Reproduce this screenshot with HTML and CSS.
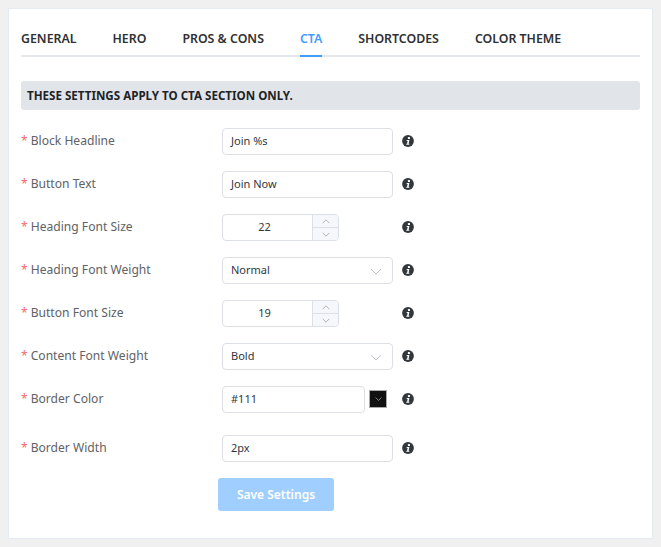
FILE: index.html
```html
<!DOCTYPE html>
<html lang="en">
<head>
    <meta charset="UTF-8">
    <meta name="viewport" content="width=device-width, initial-scale=1.0">
    <title>CTA Settings</title>
    <link rel="stylesheet" href="styles.css">
</head>
<body>
    <svg class="icon-defs" width="0" height="0">
        <symbol id="info" viewBox="0 0 12 12">
            <circle cx="6" cy="6" r="5.9" fill="#32373c"/>
            <rect x="5.900" y="1.900" width="2.100" height="2" rx="0.500" fill="#fff"/>
            <path d="M4.500 4.900h2.900L6.600 8.700h.8l-.2 1H4.200l.2-1h.7l.5-2.800h-.8z" fill="#fff"/>
        </symbol>
        <symbol id="chev-down" viewBox="0 0 12 7">
            <path d="M1 1l5 5 5-5" fill="none" stroke="currentColor" stroke-width="1"/>
        </symbol>
        <symbol id="chev-up" viewBox="0 0 12 7">
            <path d="M1 6l5-5 5 5" fill="none" stroke="currentColor" stroke-width="1"/>
        </symbol>
    </svg>

    <div class="card">
        <div class="tabs">
            <div class="tab">GENERAL</div>
            <div class="tab">HERO</div>
            <div class="tab">PROS &amp; CONS</div>
            <div class="tab active">CTA</div>
            <div class="tab">SHORTCODES</div>
            <div class="tab">COLOR THEME</div>
        </div>

        <div class="notice">THESE SETTINGS APPLY TO CTA SECTION ONLY.</div>

        <form class="form">
            <div class="row">
                <label class="label">Block Headline</label>
                <div class="field"><div class="input wide">Join %s</div></div>
                <svg class="info"><use href="#info"/></svg>
            </div>
            <div class="row">
                <label class="label">Button Text</label>
                <div class="field"><div class="input wide">Join Now</div></div>
                <svg class="info"><use href="#info"/></svg>
            </div>
            <div class="row">
                <label class="label">Heading Font Size</label>
                <div class="field">
                    <div class="number">
                        <div class="number-value">22</div>
                        <div class="stepper">
                            <div class="step"><svg class="chev-small"><use href="#chev-up"/></svg></div>
                            <div class="step"><svg class="chev-small"><use href="#chev-down"/></svg></div>
                        </div>
                    </div>
                </div>
                <svg class="info"><use href="#info"/></svg>
            </div>
            <div class="row">
                <label class="label">Heading Font Weight</label>
                <div class="field">
                    <div class="input wide select">Normal<svg class="chev"><use href="#chev-down"/></svg></div>
                </div>
                <svg class="info"><use href="#info"/></svg>
            </div>
            <div class="row">
                <label class="label">Button Font Size</label>
                <div class="field">
                    <div class="number">
                        <div class="number-value">19</div>
                        <div class="stepper">
                            <div class="step"><svg class="chev-small"><use href="#chev-up"/></svg></div>
                            <div class="step"><svg class="chev-small"><use href="#chev-down"/></svg></div>
                        </div>
                    </div>
                </div>
                <svg class="info"><use href="#info"/></svg>
            </div>
            <div class="row">
                <label class="label">Content Font Weight</label>
                <div class="field">
                    <div class="input wide select">Bold<svg class="chev"><use href="#chev-down"/></svg></div>
                </div>
                <svg class="info"><use href="#info"/></svg>
            </div>
            <div class="row row-color">
                <label class="label">Border Color</label>
                <div class="field color-field">
                    <div class="input color-input">#111</div>
                    <div class="swatch"><svg class="chev-swatch"><use href="#chev-down"/></svg></div>
                </div>
                <svg class="info"><use href="#info"/></svg>
            </div>
            <div class="row">
                <label class="label">Border Width</label>
                <div class="field"><div class="input wide">2px</div></div>
                <svg class="info"><use href="#info"/></svg>
            </div>
            <div class="actions">
                <button class="save" type="button">Save Settings</button>
            </div>
        </form>
    </div>
</body>
</html>
```

FILE: styles.css
```css
body {
    margin: 0;
    padding: 8px;
    background: #f0f0f1;
    font-family: "Noto Sans", sans-serif;
    color: #606266;
}
.icon-defs {
    display: block;
    height: 0;
}
.card {
    height: 531px;
    box-sizing: border-box;
    padding: 20px 12px 0;
    background: #fff;
    border: 1px solid #e4ebf3;
}
.tabs {
    display: flex;
    gap: 36px;
    height: 26px;
    border-bottom: 2px solid #e4e7ed;
}
.tab {
    height: 26px;
    font-size: 12.35px;
    font-weight: 600;
    line-height: 19px;
    color: #303133;
}
.tab.active {
    color: #409eff;
    border-bottom: 2px solid #409eff;
}
.notice {
    margin-top: 24px;
    height: 29px;
    padding-left: 6px;
    background: #e1e5e9;
    border-radius: 3px;
    font-size: 11.6px;
    font-weight: 700;
    line-height: 29px;
    color: #1d2327;
}
.form {
    margin-top: 18px;
}
.row {
    display: flex;
    align-items: center;
    height: 27px;
    margin-bottom: 16px;
}
.row-color {
    margin-bottom: 22px;
}
.label {
    width: 201px;
    padding-bottom: 2px;
    font-size: 12.1px;
    color: #606266;
}
.label::before {
    content: "*";
    margin-right: 3px;
    color: #f56c6c;
}
.field {
    width: 171px;
}
.input {
    box-sizing: border-box;
    height: 27px;
    padding-left: 8px;
    background: #fff;
    border: 1px solid #dcdfe6;
    border-radius: 4px;
    font-size: 11px;
    line-height: 24px;
    color: #32373c;
}
.select {
    display: flex;
    align-items: center;
    justify-content: space-between;
    padding-right: 10px;
    padding-bottom: 2px;
}
.chev {
    width: 12px;
    height: 7px;
    margin-top: 4px;
    color: #c0c4cc;
}
.number {
    display: flex;
    box-sizing: border-box;
    width: 117px;
    height: 27px;
    border: 1px solid #dcdfe6;
    border-radius: 4px;
    overflow: hidden;
}
.number-value {
    flex: 1;
    padding-right: 6px;
    text-align: center;
    font-size: 11px;
    line-height: 24px;
    color: #32373c;
}
.stepper {
    display: flex;
    flex-direction: column;
    width: 25px;
    border-left: 1px solid #dcdfe6;
}
.step {
    flex: 1;
    display: flex;
    align-items: center;
    justify-content: center;
    background: #f5f7fa;
    color: #909399;
}
.step + .step {
    border-top: 1px solid #dcdfe6;
}
.chev-small {
    width: 8px;
    height: 5px;
}
.color-field {
    display: flex;
    align-items: center;
    gap: 4px;
}
.color-input {
    width: 143px;
}
.swatch {
    display: flex;
    align-items: center;
    justify-content: center;
    box-sizing: border-box;
    width: 18px;
    height: 18px;
    margin-top: -1px;
    background: #111;
    border: 1px solid #aaa;
    color: #d0d4dc;
}
.chev-swatch {
    width: 7px;
    height: 4px;
}
.info {
    width: 12px;
    height: 12px;
    margin-left: 9px;
    margin-top: -2px;
}
.actions {
    padding-left: 197px;
}
.save {
    display: block;
    width: 116px;
    height: 33px;
    padding: 0;
    background: #a0cfff;
    border: none;
    border-radius: 3px;
    font-family: inherit;
    font-size: 12px;
    font-weight: 600;
    color: #fff;
}
```
